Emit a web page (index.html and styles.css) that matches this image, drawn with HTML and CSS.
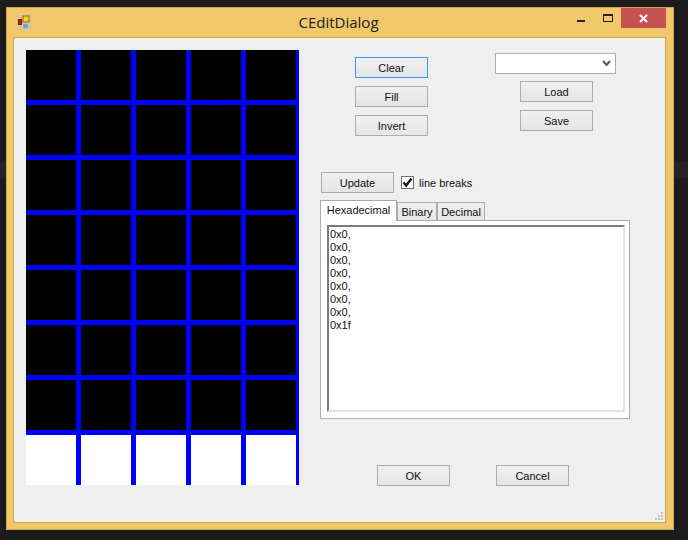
FILE: index.html
```html
<!DOCTYPE html>
<html>
<head lang="en">
    <meta charset="UTF-8">
    <title>CEditDialog</title>
    <link rel="stylesheet" href="styles.css">
</head>
<body>
    <div id="window">
        <div id="titlebar">
            <svg class="appicon" width="14" height="14" viewBox="0 0 14 14">
                <rect x="0.5" y="0.5" width="13" height="13" fill="#efc76a" stroke="#c2c2b8"/>
                <rect x="1.5" y="4.5" width="3" height="5" fill="#c4161c" stroke="#8c1014"/>
                <rect x="6" y="1" width="6" height="6" fill="#f6d232" stroke="#8a6a10"/>
                <rect x="6" y="9" width="5" height="4" fill="#5a9be6" stroke="#9fc4ee" stroke-width="0.6"/>
            </svg>
            <span id="caption">CEditDialog</span>
            <span class="winbtn"><i class="min"></i></span>
            <span class="winbtn"><i class="max"></i></span>
            <span class="winbtn close">
                <svg width="9" height="9" viewBox="0 0 9 9"><path d="M1 1 L8 8 M8 1 L1 8" stroke="#fff" stroke-width="2"/></svg>
            </span>
        </div>
        <div id="client">
            <div id="pixels"></div>
            <div id="side">
                <div class="toprow">
                    <div class="stack">
                        <button class="focused">Clear</button>
                        <button>Fill</button>
                        <button>Invert</button>
                    </div>
                    <div class="filebox">
                        <div class="combo">
                            <svg width="9" height="7" viewBox="0 0 9 7"><path d="M1 1 L4.5 5 L8 1" fill="none" stroke="#555" stroke-width="2"/></svg>
                        </div>
                        <div class="stack">
                            <button>Load</button>
                            <button>Save</button>
                        </div>
                    </div>
                </div>
                <div class="updaterow">
                    <button>Update</button>
                    <label class="check">
                        <span class="box">
                            <svg width="11" height="11" viewBox="0 0 11 11"><path d="M1.5 5.5 L4.2 8.5 L9.5 1.5" fill="none" stroke="#111" stroke-width="2.4"/></svg>
                        </span>
                        line breaks
                    </label>
                </div>
                <div id="tabs">
                    <span class="tab selected">Hexadecimal</span>
                    <span class="tab">Binary</span>
                    <span class="tab">Decimal</span>
                </div>
                <div id="tabpage">
                    <div id="output">0x0,<br>0x0,<br>0x0,<br>0x0,<br>0x0,<br>0x0,<br>0x0,<br>0x1f</div>
                </div>
                <div class="bottomrow">
                    <button>OK</button>
                    <button>Cancel</button>
                </div>
            </div>
            <div id="grip">
                <i></i><i></i><i></i><i></i><i></i><i></i>
            </div>
        </div>
    </div>

    <script>
        // 5 x 8 cell matrix, only the last row is lit
        var pixels = document.getElementById("pixels");
        for(var i = 0; i < 40; ++i)
        {
            var cell = document.createElement("div");
            cell.className = i >= 35 ? "cell on" : "cell";
            pixels.appendChild(cell);
        }
    </script>
</body>
</html>
```

FILE: styles.css
```css
*
{
    margin: 0;
    padding: 0;
    box-sizing: border-box;
}

body
{
    width: 688px;
    height: 540px;
    padding: 7px 14px 10px 6px;
    background: linear-gradient(#1c1c1c 162px, #242424 162px, #242424 178px, #1c1c1c 178px);
    font-family: "Liberation Sans", sans-serif;
    font-size: 11px;
    color: #111;
    overflow: hidden;
}

#window
{
    height: 523px;
    padding: 0 7px 6px 6px;
    background: #f0c86a;
    border: 1px solid #c9a85c;
    display: flex;
    flex-direction: column;
}

#titlebar
{
    height: 29px;
    flex: none;
    display: flex;
    align-items: flex-start;
    position: relative;
}

.appicon
{
    margin: 7px 0 0 4px;
}

#caption
{
    position: absolute;
    left: 0;
    right: 2px;
    top: 4px;
    text-align: center;
    font-family: "Open Sans", sans-serif;
    font-size: 15px;
    line-height: 20px;
    color: #222;
}

.winbtn
{
    width: 26px;
    height: 20px;
    display: flex;
    align-items: center;
    justify-content: center;
    position: relative;
}

.winbtn:nth-of-type(2)
{
    margin-left: auto;
    margin-right: 1px;
}

.min
{
    width: 8px;
    height: 2px;
    margin-top: 6px;
    background: #222;
}

.max
{
    width: 10px;
    height: 8px;
    border: 1px solid #222;
    border-top-width: 2px;
}

.winbtn.close
{
    width: 45px;
    background: #c75050;
}

#client
{
    flex: 1;
    padding: 12px;
    background: #efefef;
    border: 1px solid #c9a85c;
    display: flex;
    position: relative;
}

#pixels
{
    width: 273px;
    height: 435px;
    padding-right: 3px;
    background: #0000ff;
    display: grid;
    grid-template-columns: repeat(5, 50px);
    grid-auto-rows: 50px;
    gap: 5px;
    flex: none;
}

.cell
{
    background: #000;
}

.cell.on
{
    background: #fff;
}

#side
{
    width: 310px;
    margin-left: 21px;
    padding-top: 3px;
    display: flex;
    flex-direction: column;
}

button
{
    width: 73px;
    height: 21px;
    background: linear-gradient(#f0f0f0, #e5e5e5);
    border: 1px solid #acacac;
    font-family: "Liberation Sans", sans-serif;
    font-size: 11px;
    color: #111;
    display: block;
}

button.focused
{
    border-color: #3399ff;
}

.toprow
{
    display: flex;
    padding-left: 35px;
}

.stack
{
    display: flex;
    flex-direction: column;
    gap: 8px;
    padding-top: 4px;
}

.filebox
{
    width: 121px;
    margin-left: 67px;
    display: flex;
    flex-direction: column;
}

.filebox .stack
{
    padding-top: 7px;
    padding-left: 25px;
}

.combo
{
    width: 121px;
    height: 21px;
    background: #fff;
    border: 1px solid #acacac;
    display: flex;
    align-items: center;
    justify-content: flex-end;
    padding-right: 4px;
}

.updaterow
{
    display: flex;
    align-items: center;
    margin-top: 36px;
    margin-left: 1px;
}

.check
{
    display: flex;
    align-items: center;
    margin-left: 7px;
    gap: 5px;
}

.box
{
    width: 13px;
    height: 13px;
    background: #fff;
    border: 1px solid #707070;
    display: flex;
    align-items: center;
    justify-content: center;
}

#tabs
{
    display: flex;
    align-items: flex-end;
    height: 20px;
    margin-top: 7px;
    position: relative;
    z-index: 1;
}

.tab
{
    height: 18px;
    line-height: 19px;
    text-align: center;
    background: linear-gradient(#f0f0f0, #e5e5e5);
    border: 1px solid #acacac;
    border-bottom: 0;
    width: 40px;
}

.tab:last-child
{
    width: 48px;
}

.tab.selected
{
    height: 21px;
    width: 77px;
    margin-bottom: -1px;
    line-height: 18px;
    background: #fff;
}

#tabpage
{
    width: 310px;
    height: 199px;
    padding: 4px 5px 5px 6px;
    background: #fff;
    border: 1px solid #acacac;
}

#output
{
    height: 187px;
    width: 298px;
    padding: 1px 1px;
    line-height: 13px;
    font-size: 11px;
    border: 2px solid;
    border-color: #7a7a7a #e3e3e3 #e3e3e3 #7a7a7a;
    background: #fff;
}

.bottomrow
{
    display: flex;
    margin-top: 46px;
    margin-left: 57px;
    gap: 46px;
}

#grip
{
    position: absolute;
    right: 2px;
    bottom: 2px;
    width: 8px;
    height: 8px;
    display: grid;
    grid-template-columns: repeat(3, 2px);
    grid-auto-rows: 2px;
    gap: 1px;
}

#grip i
{
    background: #c4c4c4;
}

#grip i:nth-child(1)
{
    grid-column: 3;
}

#grip i:nth-child(2)
{
    grid-column: 2;
}
```
